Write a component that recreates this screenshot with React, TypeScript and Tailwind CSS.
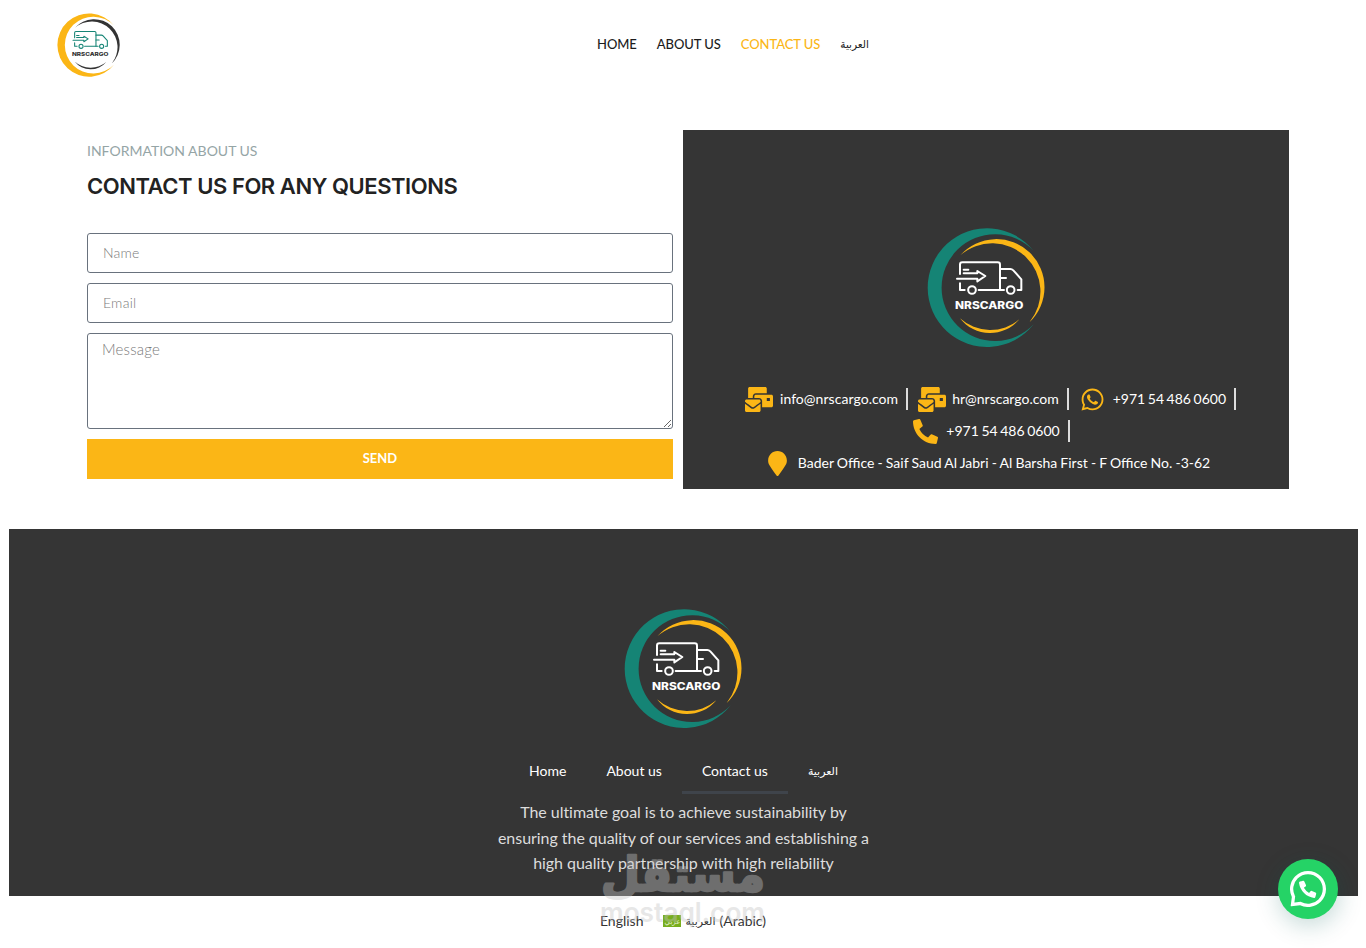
import React, { useState } from 'react';
import { FaMailBulk, FaMapMarker, FaPhoneAlt, FaWhatsapp } from 'react-icons/fa';

type LogoProps = {
  className: string;
  ring: string;
  arc: string;
  truck: string;
  label: string;
};

function Logo({ className, ring, arc, truck, label }: LogoProps) {
  return (
    <svg className={className} viewBox="2 2 420 405" fill="none">
      <path fill={ring} d="M355 95A178 178 0 1 0 355 315A160 160 0 1 1 355 95Z" />
      <path fill={arc} d="M135 108A144.4 144.4 0 1 1 343 308A144.8 144.8 0 0 0 135 108Z" />
      <path fill={arc} d="M134 297A114 114 0 0 0 312 300A135 135 0 0 1 134 297Z" />
      <g stroke={truck} strokeWidth="6" strokeLinecap="round" strokeLinejoin="round">
        <path d="M134 164V136Q134 129 141 129H247Q254 129 254 136V212" />
        <path d="M134 192V212H148M190 212H266M254 149H285Q290 149 294 153L318 180V212H307" />
        <path d="M254 176H272M145 151H159" />
        <path d="M145 162H186V155L210 170L186 186V178H125" />
        <circle cx="170" cy="212" r="11.5" />
        <circle cx="286" cy="212" r="11.5" />
      </g>
      <text
        x="119"
        y="268"
        fill={label}
        fontFamily="Inter, sans-serif"
        fontWeight="800"
        fontSize="30"
        textLength="205"
        lengthAdjust="spacingAndGlyphs"
      >
        NRSCARGO
      </text>
    </svg>
  );
}

function Divider() {
  return <span className="mx-2 h-[22px] w-0.5 bg-[#dddddd]" />;
}

function ContactItem({ icon, children }: { icon: React.ReactNode; children: React.ReactNode }) {
  return (
    <span className="flex items-center">
      <span className="flex w-[31px] justify-center text-[25px] text-[#fbb616]">{icon}</span>
      <span className="pl-[5px] text-white">{children}</span>
    </span>
  );
}

export default function Contact() {
  const [form, setForm] = useState({ name: '', email: '', message: '' });

  const topLinks = [
    { label: 'HOME', active: false },
    { label: 'ABOUT US', active: false },
    { label: 'CONTACT US', active: true }
  ];

  const footerLinks = [
    { label: 'Home', active: false },
    { label: 'About us', active: false },
    { label: 'Contact us', active: true }
  ];

  return (
    <div className="relative h-[948px] overflow-hidden bg-white font-['Lato','DejaVu_Sans',sans-serif]">
      {/* Header */}
      <header className="flex h-[90px] items-start">
        <div className="w-[597px] pt-[9px] pl-[51px]">
          <Logo
            className="h-[72px] w-[75px]"
            ring="#fbb616"
            arc="#333333"
            truck="#158475"
            label="#333333"
          />
        </div>
        <nav className="flex gap-5 pt-[34px] text-[13px] leading-5 font-medium tracking-[-0.07px] text-[#1c1c1c]">
          {topLinks.map((link) => (
            <a key={link.label} href="#" className={link.active ? 'text-[#fbb616]' : ''}>
              {link.label}
            </a>
          ))}
          <a href="#" lang="ar" className="text-[10.5px] tracking-normal">العربية</a>
        </nav>
      </header>

      {/* Contact Section */}
      <section className="mt-10 ml-[77px] flex h-[359px] w-[1212px]">
        <div className="w-[606px] px-2.5 pt-2.5">
          <p className="text-sm leading-[22px] text-[#95a5a6]">INFORMATION ABOUT US</p>
          <h2 className="mt-2 h-[53px] font-['Inter',sans-serif] text-[22px] leading-[33px] font-semibold tracking-[-0.45px] whitespace-nowrap text-[#222222]">
            CONTACT US FOR ANY QUESTIONS
          </h2>
          <form className="mt-2.5 flex flex-col gap-2.5" onSubmit={(e) => e.preventDefault()}>
            <input
              className="h-10 rounded-[3px] border border-[#69727d] px-[15px] pb-0.5 text-sm font-light tracking-[0.25px] placeholder:text-[#7a7a7a]"
              placeholder="Name"
              value={form.name}
              onChange={(e) => setForm({ ...form, name: e.target.value })}
            />
            <input
              className="h-10 rounded-[3px] border border-[#69727d] px-[15px] pb-0.5 text-sm font-light tracking-[0.25px] placeholder:text-[#7a7a7a]"
              placeholder="Email"
              value={form.email}
              onChange={(e) => setForm({ ...form, email: e.target.value })}
            />
            <textarea
              className="h-24 rounded-[3px] border border-[#69727d] px-3.5 py-1 text-[15px] leading-[23px] font-light tracking-[0.2px] placeholder:text-[#7a7a7a]"
              placeholder="Message"
              value={form.message}
              onChange={(e) => setForm({ ...form, message: e.target.value })}
            />
            <button className="h-10 bg-[#fbb616] pb-px text-[13px] font-bold text-white">SEND</button>
          </form>
        </div>

        <div className="flex w-[606px] flex-col items-center bg-[#353535] pt-[90px]">
          <Logo
            className="h-[135px] w-[140px]"
            ring="#158475"
            arc="#fbb616"
            truck="#ffffff"
            label="#ffffff"
          />
          <div className="mt-7 flex flex-col items-center text-sm whitespace-nowrap">
            <div className="flex h-8 items-center pl-2">
              <ContactItem icon={<FaMailBulk className="h-[25px] w-7" />}>
                <span className="tracking-[0.05px]">info@nrscargo.com</span>
              </ContactItem>
              <Divider />
              <ContactItem icon={<FaMailBulk className="h-[25px] w-7" />}>hr@nrscargo.com</ContactItem>
              <Divider />
              <ContactItem icon={<FaWhatsapp />}>
                <span className="[word-spacing:-1px]">+971 54 486 0600</span>
              </ContactItem>
              <span className="ml-2 h-[22px] w-0.5 bg-[#dddddd]" />
            </div>
            <div className="flex h-8 items-center pl-2">
              <ContactItem icon={<FaPhoneAlt />}>
                <span className="[word-spacing:-1px]">+971 54 486 0600</span>
              </ContactItem>
              <span className="ml-2 h-[22px] w-0.5 bg-[#dddddd]" />
            </div>
            <div className="flex h-8 items-center">
              <ContactItem icon={<FaMapMarker />}>
                <span className="[word-spacing:-0.45px]">
                  Bader Office - Saif Saud Al Jabri - Al Barsha First - F Office No. -3-62
                </span>
              </ContactItem>
            </div>
          </div>
        </div>
      </section>

      {/* Footer */}
      <footer className="mt-10 ml-[9px] flex h-[367px] w-[1349px] flex-col items-center bg-[#353535] pt-[72px]">
        <Logo
          className="mr-[2px] h-[135px] w-[140px]"
          ring="#158475"
          arc="#fbb616"
          truck="#ffffff"
          label="#ffffff"
        />
        <nav className="mt-3 flex h-[46px] text-sm leading-[46px] text-white">
          {footerLinks.map((link) => (
            <a
              key={link.label}
              href="#"
              className={`h-[46px] border-b-[3px] px-5 ${link.active ? 'border-[#3f444b]' : 'border-transparent'}`}
            >
              {link.label}
            </a>
          ))}
          <a href="#" lang="ar" className="px-5 text-[11px] leading-[46px]">العربية</a>
        </nav>
        <p className="mt-[5px] w-[386px] text-center text-base leading-[25.6px] tracking-[-0.04px] text-[#dddddd] [font-variant-ligatures:none]">
          The ultimate goal is to achieve sustainability by ensuring the quality of our services and
          establishing a high quality partnership with high reliability
        </p>
      </footer>

      {/* Language switcher */}
      <div className="flex h-[50px] items-center justify-center gap-5 text-sm text-[#333333]">
        <a href="#">English</a>
        <a href="#" className="flex items-center gap-1">
          <span lang="ar" className="flex h-3 w-[18px] items-center justify-center bg-[#78ae1e] text-[7px] leading-3 text-[#e4efd2]">
            عربي
          </span>
          <span className="flex items-center gap-1">
            <span lang="ar" className="text-[11px]">العربية</span> (Arabic)
          </span>
        </a>
      </div>

      {/* Watermark */}
      <svg
        className="pointer-events-none absolute top-[835px] left-[595px] h-[105px] w-[176px] overflow-visible opacity-40"
        viewBox="0 0 176 105"
        fill="#c4c4c4"
      >
        <text
          x="88"
          y="56"
          textAnchor="middle"
          fontFamily="DejaVu Sans, sans-serif"
          fontWeight="700"
          fontSize="48"
          stroke="#c4c4c4"
          strokeWidth="2.5"
          strokeLinejoin="round"
          direction="rtl"
          textLength="164"
          lengthAdjust="spacingAndGlyphs"
        >
          مستقل
        </text>
        <text
          x="5"
          y="87"
          fontFamily="Inter, sans-serif"
          fontWeight="600"
          fontSize="27"
          textLength="165"
          lengthAdjust="spacingAndGlyphs"
        >
          mostaql.com
        </text>
      </svg>

      {/* Chat button */}
      <button className="absolute top-[859px] left-[1278px] flex size-[60px] items-center justify-center rounded-full bg-[#25d366] shadow-[1px_6px_24px_0_rgba(7,94,84,0.24)]">
        <svg className="size-9" viewBox="0 0 24 24" fill="#ffffff">
          <path d="M3.516 3.516c4.686-4.686 12.284-4.686 16.97 0 4.686 4.686 4.686 12.283 0 16.97a12.004 12.004 0 0 1-13.754 2.299l-5.814.735a.392.392 0 0 1-.438-.44l.748-5.788A12.002 12.002 0 0 1 3.517 3.517zm3.61 17.043.3.158a9.846 9.846 0 0 0 11.534-1.758c3.843-3.843 3.843-10.074 0-13.918-3.843-3.843-10.075-3.843-13.918 0a9.846 9.846 0 0 0-1.747 11.554l.16.303-.51 3.942a.196.196 0 0 0 .219.22l3.961-.501zm6.534-7.003-.933 1.164a9.843 9.843 0 0 1-3.497-3.495l1.166-.933a.792.792 0 0 0 .23-.94L9.561 6.96a.793.793 0 0 0-.924-.445 1291.6 1291.6 0 0 0-2.023.524.797.797 0 0 0-.588.88 11.754 11.754 0 0 0 10.005 10.005.797.797 0 0 0 .88-.587l.525-2.023a.793.793 0 0 0-.445-.923L14.6 13.327a.792.792 0 0 0-.94.23z" />
        </svg>
      </button>
    </div>
  );
}
